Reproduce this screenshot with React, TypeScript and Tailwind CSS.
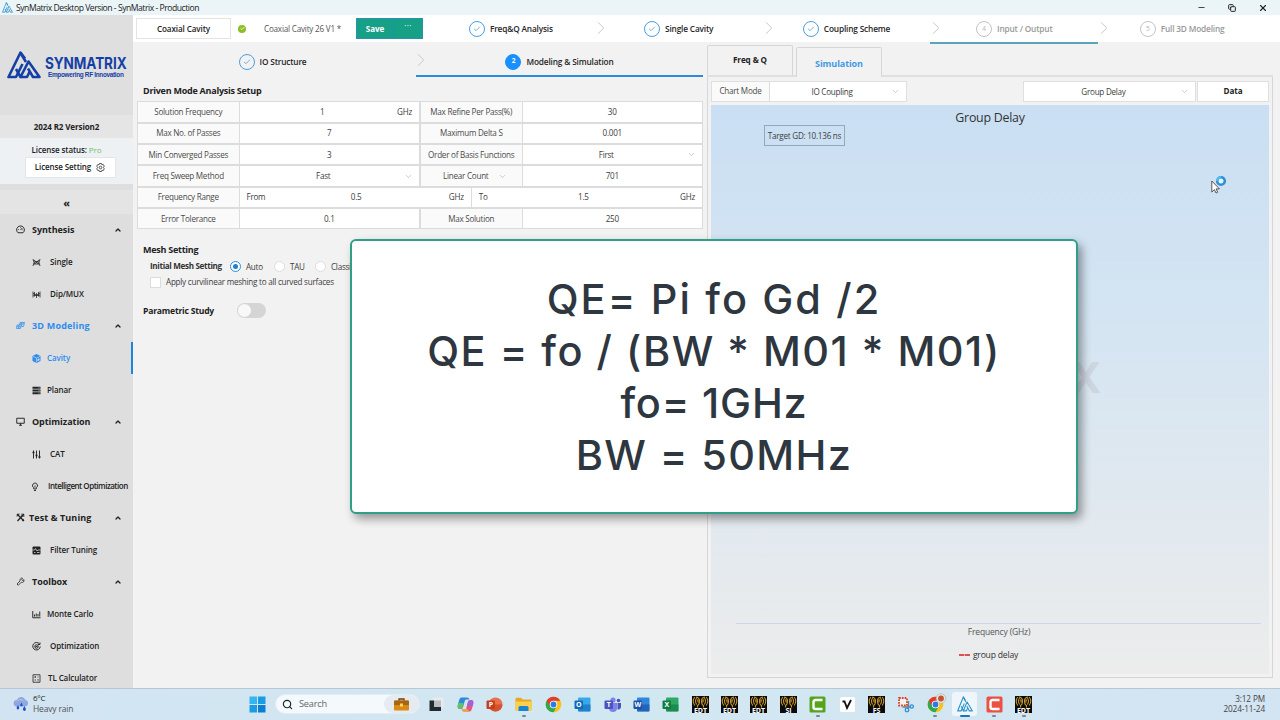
import type { ReactNode } from "react";
import clsx from "clsx";
import { Check, ChevronDown, ChevronRight, ChevronUp, Copy, Minus, Search, X } from "lucide-react";

type Step = {
  label: string;
  state: "done" | "current" | "waiting";
  number: number;
  active?: boolean;
};

const HEADER_STEPS: Step[] = [
  { label: "Freq&Q Analysis", state: "done", number: 1 },
  { label: "Single Cavity", state: "done", number: 2 },
  { label: "Coupling Scheme", state: "done", number: 3 },
  { label: "Input / Output", state: "waiting", number: 4, active: true },
  { label: "Full 3D Modeling", state: "waiting", number: 5 },
];

type MenuItem = {
  label: string;
  icon: ReactNode;
  group?: boolean;
  active?: boolean;
  className: string;
};

const MENU: MenuItem[] = [
  { label: "Synthesis", icon: <GaugeIcon />, group: true, className: "ml-[7px]" },
  { label: "Single", icon: <SingleIcon />, className: "ml-[9px]" },
  { label: "Dip/MUX", icon: <MuxIcon />, className: "ml-[9px]" },
  { label: "3D Modeling", icon: <BlocksIcon />, group: true, active: true, className: "ml-[7px] tracking-[0.2px]" },
  { label: "Cavity", icon: <CubeIcon />, active: true, className: "ml-[6px]" },
  { label: "Planar", icon: <LayersIcon />, className: "ml-[6px]" },
  { label: "Optimization", icon: <MonitorIcon />, group: true, className: "ml-[7px]" },
  { label: "CAT", icon: <SlidersIcon />, className: "ml-[9px]" },
  { label: "Intelligent Optimization", icon: <BulbIcon />, className: "ml-[7px] tracking-[-0.5px]" },
  { label: "Test & Tuning", icon: <ToolsIcon />, group: true, className: "ml-[4px] tracking-[0.1px]" },
  { label: "Filter Tuning", icon: <FilterIcon />, className: "ml-[9px]" },
  { label: "Toolbox", icon: <WrenchIcon />, group: true, className: "ml-[7px]" },
  { label: "Monte Carlo", icon: <ChartIcon />, className: "ml-[6px]" },
  { label: "Optimization", icon: <TargetIcon />, className: "ml-[9px]" },
  { label: "TL Calculator", icon: <CalcIcon />, className: "ml-[7px]" },
];

export default function App() {
  return (
    <div className="relative flex h-[720px] w-[1280px] flex-col overflow-hidden bg-[#f2f2f2] font-['Open_Sans','Noto_Sans',sans-serif] text-[8.1px] leading-none tracking-[-0.25px] text-[#3d3d3d]">
      <TitleBar />
      <div className="flex min-h-0 flex-1">
        <Sidebar />
        <div className="flex min-w-0 flex-1 flex-col">
          <Header />
          <div className="flex flex-1">
            <SetupPane />
            <ResultPane />
          </div>
        </div>
      </div>
      <Taskbar />
      <FormulaCard />
      <Cursor />
    </div>
  );
}

function TitleBar() {
  return (
    <div className="flex h-[15px] shrink-0 items-center bg-[#ebf4f7] pl-[2px] text-[#222]">
      <MountainIcon className="h-[11px] w-[11px] text-[#2b93c9]" />
      <span className="mt-px ml-[3px] text-[8.6px] tracking-[-0.47px]">
        SynMatrix Desktop Version - SynMatrix - Production
      </span>
      <div className="ml-auto flex items-center gap-[22px] pr-[12px]">
        <Minus className="size-[9px]" strokeWidth={2.2} />
        <Copy className="size-[8px] -scale-x-100 -rotate-90" strokeWidth={3} />
        <X className="size-[10px]" strokeWidth={2.6} />
      </div>
    </div>
  );
}

function Sidebar() {
  return (
    <aside className="flex w-[133px] shrink-0 flex-col overflow-hidden bg-[#dedede] tracking-[-0.1px] text-[#222]">
      <div className="flex h-[100px] shrink-0 items-center bg-[#dfdfdf] pl-[7px]">
        <MountainIcon className="h-[28px] w-[34px] shrink-0 text-[#1440a5]" bold />
        <div className="mt-[3px] ml-[4px] flex flex-col text-[#1440a5]">
          <span className="origin-left scale-x-[0.82] font-['Inter',sans-serif] text-[16.5px] leading-[16px] font-bold tracking-[-0.1px]">
            SYNMATRIX
          </span>
          <span className="ml-[3px] font-['Liberation_Sans',sans-serif] text-[6.4px] leading-[8px] font-bold tracking-[-0.3px]">
            Empowering RF Innovation
          </span>
        </div>
      </div>
      <div className="flex h-[23px] shrink-0 items-center justify-center bg-[#e5e5e5] text-[8px] font-bold">
        2024 R2 Version2
      </div>
      <div className="flex h-[46px] shrink-0 flex-col items-center bg-[#eef1f4] pt-[8px] text-[8px] font-semibold">
        <div>
          License status: <span className="font-normal text-[#6cc067]">Pro</span>
        </div>
        <div className="mt-[3px] ml-[7px] flex h-[21px] w-[91px] shrink-0 items-center justify-center gap-[5px] border border-[#e3e5e8] bg-white pb-px">
          License Setting
          <GearIcon />
        </div>
      </div>
      <div className="mt-[6px] flex h-[24px] shrink-0 items-center justify-center bg-[#e4e4e4] text-[11px] font-bold">
        «
      </div>
      <nav className="flex flex-col">
        {MENU.map((item, i) => (
          <div
            key={i}
            className={clsx(
              "flex h-[32px] shrink-0 items-center whitespace-nowrap",
              item.group
                ? "pb-px pl-[16px] text-[9px] font-bold tracking-[-0.05px]"
                : "pl-[32px] text-[8px] font-semibold",
              item.active && "text-[#2d8cf0]",
              item.active && !item.group && "border-r-2 border-[#1c86dc]"
            )}
          >
            <span className="size-[9px] shrink-0">{item.icon}</span>
            <span className={item.className}>{item.label}</span>
            {item.group && (
              <ChevronUp className="mr-[11px] ml-auto size-[8px] text-[#222]" strokeWidth={4} />
            )}
          </div>
        ))}
      </nav>
    </aside>
  );
}

function Header() {
  return (
    <header className="flex h-[27px] shrink-0 bg-white pt-[3px] pl-[3px]">
      <div className="flex h-[21px] w-[95px] items-center justify-center border border-[#e4e4e4] pt-px font-semibold tracking-[-0.1px] text-[#222]">
        Coaxial Cavity
      </div>
      <div className="ml-[7px] flex h-[21px] items-center">
        <span className="flex size-[8px] items-center justify-center rounded-full bg-[#8cbf26]">
          <Check className="size-[5px] text-white" strokeWidth={4} />
        </span>
        <span className="mt-px ml-[18px] w-[92px] tracking-[-0.2px] text-[#555]">Coaxial Cavity 26 V1 *</span>
      </div>
      <div className="flex h-[21px] w-[67px] items-center border border-[#2a92b0] bg-[#16a085] font-bold tracking-[-0.1px] text-white">
        <span className="flex h-full w-[37px] items-center justify-center border-r border-[#1a94a8] pt-px">Save</span>
        <span className="flex flex-1 justify-center pb-[4px] tracking-[0.4px] font-normal">···</span>
      </div>
      <div className="ml-[4px] flex w-[839px]">
        {HEADER_STEPS.map((step, i) => (
          <div
            key={step.number}
            className={clsx(
              "relative flex h-[26px] flex-1 items-center justify-center",
              step.active ? "border-b-2 border-[#5aa5b8] pb-[2px]" : "pb-[4px]"
            )}
          >
            <StepLabel step={step} />
            {i < HEADER_STEPS.length - 1 && (
              <ChevronRight
                className="absolute -top-px -right-[17px] size-[22px] text-[#c4c4c4]"
                strokeWidth={1}
              />
            )}
          </div>
        ))}
      </div>
    </header>
  );
}

function StepLabel({ step }: { step: Step }) {
  return (
    <>
      <span
        className={clsx(
          "flex size-[16px] shrink-0 items-center justify-center rounded-full border text-[6.5px]",
          step.state === "done" && "border-[#4a9fe0] text-[#4a9fe0]",
          step.state === "current" && "border-[#1890ff] bg-[#1890ff] font-bold text-white",
          step.state === "waiting" && "border-[#c4c4c4] text-[#b4b4b4]"
        )}
      >
        {step.state === "done" ? <Check className="size-[8px]" strokeWidth={2.4} /> : step.number}
      </span>
      <span
        className={clsx(
          "mt-px ml-[5px] text-[8.3px] font-semibold tracking-[-0.17px] whitespace-nowrap",
          step.state === "waiting" ? "text-[#999]" : "text-[#262626]"
        )}
      >
        {step.label}
      </span>
    </>
  );
}

function Label({ children, className = "w-[101.5px]" }: { children: ReactNode; className?: string }) {
  return (
    <div
      className={clsx(
        "flex h-full shrink-0 items-center justify-center border-r border-[#dcdcdc] bg-[#fafafa] text-[#4a4a4a]",
        className
      )}
    >
      {children}
    </div>
  );
}

type ValueProps = { children: ReactNode; unit?: string; select?: boolean; className?: string };

function Value({ children, unit, select, className }: ValueProps) {
  return (
    <div className="flex h-full flex-1 items-center bg-white">
      <span
        className={clsx(
          "flex-1 text-center",
          unit && !className && "pl-[8px]",
          select && "pt-px pl-[3px]",
          className
        )}
      >
        {children}
      </span>
      {unit && <span className="pr-[7px]">{unit}</span>}
      {select && <ChevronDown className="mr-[6px] size-[9px] text-[#b5b5b5]" strokeWidth={1.8} />}
    </div>
  );
}

function Row({ left, right }: { left: ReactNode; right: ReactNode }) {
  return (
    <div className="flex h-[21.33px]">
      <div className="flex w-[283px] items-center border border-[#dcdcdc]">{left}</div>
      <div className="flex w-[283px] items-center border border-[#dcdcdc]">{right}</div>
    </div>
  );
}

function SetupPane() {
  return (
    <section className="flex w-[574px] flex-col">
      <div className="flex h-[35px]">
        <div className="relative flex w-[279px] items-center justify-center pt-[4px]">
          <StepLabel step={{ label: "IO Structure", state: "done", number: 1 }} />
          <ChevronRight
            className="absolute top-[7px] -right-[20px] size-[22px] text-[#c4c4c4]"
            strokeWidth={1}
          />
        </div>
        <div className="ml-[4px] flex w-[287px] items-center justify-center border-b-2 border-[#2d8cd8] pt-[6px]">
          <StepLabel step={{ label: "Modeling & Simulation", state: "current", number: 2 }} />
        </div>
      </div>

      <h2 className="mt-[9px] ml-[10px] text-[9px] leading-[10px] font-bold tracking-[-0.25px] text-[#222]">
        Driven Mode Analysis Setup
      </h2>
      <div className="mt-[5.4px] ml-[4px] flex flex-col">
        <Row
          left={<><Label>Solution Frequency</Label><Value unit="GHz">1</Value></>}
          right={<><Label>Max Refine Per Pass(%)</Label><Value>30</Value></>}
        />
        <Row
          left={<><Label>Max No. of Passes</Label><Value>7</Value></>}
          right={<><Label>Maximum Delta S</Label><Value>0.001</Value></>}
        />
        <Row
          left={<><Label>Min Converged Passes</Label><Value>3</Value></>}
          right={<><Label>Order of Basis Functions</Label><Value select>First</Value></>}
        />
        <Row
          left={<><Label>Freq Sweep Method</Label><Value select>Fast</Value></>}
          right={
            <>
              <Label>
                <span className="pt-px pl-[8px]">Linear Count</span>
                <ChevronDown className="ml-[10px] size-[9px] text-[#b5b5b5]" strokeWidth={1.8} />
              </Label>
              <Value>701</Value>
            </>
          }
        />
        <div className="flex h-[21.33px] w-[566px] items-center border border-[#dcdcdc] bg-white">
          <Label>Frequency Range</Label>
          <span className="w-[28px] pl-[7px]">From</span>
          <Value unit="GHz" className="pr-[4px]">0.5</Value>
          <span className="flex h-full w-[28px] items-center border-l border-[#dcdcdc] pl-[7px]">To</span>
          <Value unit="GHz" className="pr-[12px]">1.5</Value>
        </div>
        <Row
          left={<><Label>Error Tolerance</Label><Value>0.1</Value></>}
          right={<><Label>Max Solution</Label><Value>250</Value></>}
        />
      </div>

      <h2 className="mt-[15.6px] ml-[10px] text-[9px] leading-[10px] font-bold tracking-[-0.25px] text-[#222]">
        Mesh Setting
      </h2>
      <div className="mt-[6px] ml-[17px] flex h-[11px] items-center">
        <span className="w-[80px] font-bold tracking-[-0.33px] whitespace-nowrap text-[#333]">Initial Mesh Setting</span>
        <Radio checked />
        <span className="ml-[5px] w-[28px] pt-px">Auto</span>
        <Radio />
        <span className="ml-[5px] w-[25px] pt-px">TAU</span>
        <Radio />
        <span className="ml-[5px] pt-px">Classic</span>
      </div>
      <div className="mt-[5px] ml-[17px] flex h-[11px] items-center">
        <span className="size-[11px] border border-[#dcdcdc] bg-white" />
        <span className="ml-[5px] tracking-[-0.24px]">Apply curvilinear meshing to all curved surfaces</span>
      </div>
      <div className="mt-[15px] ml-[10px] flex h-[15px] items-center">
        <h2 className="w-[94px] pt-px text-[8.6px] font-bold tracking-[-0.22px] text-[#222]">Parametric Study</h2>
        <span className="h-[15px] w-[29px] rounded-full bg-[#d5d5d5] p-px">
          <span className="block size-[13px] rounded-full bg-[#f8f8f8]" />
        </span>
      </div>
    </section>
  );
}

function Radio({ checked = false }: { checked?: boolean }) {
  return (
    <span
      className={clsx(
        "flex size-[11px] items-center justify-center rounded-full border bg-white",
        checked ? "border-[#2d8cd8]" : "border-[#dcdcdc]"
      )}
    >
      {checked && <span className="size-[5px] rounded-full bg-[#1c80d6]" />}
    </span>
  );
}

function ResultPane() {
  return (
    <section className="flex w-[566px] flex-col pt-[3px]">
      <div className="flex h-[32px] items-end border-b-2 border-[#dfdfdf]">
        <div className="flex h-[30px] w-[86px] items-center justify-center rounded-t-[2px] border border-b-0 border-[#d6d6d6] font-bold tracking-[-0.1px] text-[#222]">
          Freq &amp; Q
        </div>
        <div className="-mb-[2px] ml-[3px] flex h-[30px] w-[86px] items-center justify-center rounded-t-[2px] border border-b-0 border-[#d6d6d6] bg-[#f2f2f2] pt-px text-[9px] font-bold tracking-[-0.1px] text-[#4398e4]">
          Simulation
        </div>
      </div>
      <div className="flex h-[601px] flex-col border border-t-0 border-[#d6d6d6] px-[3px] pt-[4px]">
        <div className="flex h-[21px]">
          <div className="flex w-[196px] border border-[#dfdfdf]">
            <Label className="w-[58px]">Chart Mode</Label>
            <Value select>IO Coupling</Value>
          </div>
          <div className="ml-[116px] flex w-[173px] border border-[#dfdfdf]">
            <Value select>Group Delay</Value>
          </div>
          <div className="ml-[1px] flex w-[72px] items-center justify-center border border-[#dfdfdf] bg-white font-bold tracking-[-0.1px] text-[#222]">
            Data
          </div>
        </div>
        <div className="relative mt-[3px] flex h-[569px] w-[558px] flex-col items-center bg-linear-to-b from-[#cadff3] via-[#d5e5f2] via-40% to-[#ececec] pt-[5px]">
          <span className="text-[12.4px] leading-[16px] font-medium tracking-[-0.25px] text-[#333]">Group Delay</span>
          <span className="absolute top-[20px] left-[53px] flex h-[21px] w-[81px] items-center justify-center border border-[#93a8b8] pt-px">
            Target GD: 10.136 ns
          </span>
          <span className="absolute top-[252px] right-[168px] font-['Inter',sans-serif] text-[42px] leading-[42px] font-bold text-[#cdd6e0]">
            X
          </span>
          <div className="mt-[497px] ml-[16px] h-px w-[525px] shrink-0 bg-[#cbd6e8]" />
          <span className="mt-[3px] ml-[18px] text-[8.5px] leading-[10px] tracking-[-0.17px] text-[#555]">
            Frequency (GHz)
          </span>
          <span className="mt-[13px] -ml-[3px] flex items-center text-[8.6px] leading-[10px] tracking-[-0.2px] text-[#333]">
            <svg className="mr-[3px] h-[2px] w-[11px]" viewBox="0 0 11 2">
              <path d="M0 1h5.200M5.800 1H11" stroke="#d81e1e" strokeWidth="1.600" />
            </svg>
            group delay
          </span>
        </div>
      </div>
    </section>
  );
}

function FormulaCard() {
  return (
    <div className="absolute top-[239px] left-[350px] flex h-[275px] w-[728px] flex-col items-center rounded-[6px] border-2 border-[#2f9f87] bg-white pt-[32px] font-['Inter',sans-serif] text-[41.500px] leading-[52px] font-medium whitespace-nowrap text-[#2e373f] shadow-[4px_5px_10px_rgba(0,0,0,0.38)]">
      <p className="tracking-[2.1px]">QE= Pi fo Gd /2</p>
      <p className="tracking-[1.48px]">QE = fo / (BW * M01 * M01)</p>
      <p className="tracking-[0.8px]">fo= 1GHz</p>
      <p className="tracking-[1.35px]">BW = 50MHz</p>
    </div>
  );
}

function Cursor() {
  return (
    <svg className="absolute top-[174px] left-[1210px] h-[20px] w-[18px]" viewBox="0 0 18 20">
      <path d="M1.8 7v11l2.6-2.4 1.6 3.4 1.7-.8-1.6-3.3h3.3z" fill="#fff" stroke="#333" strokeWidth=".8" />
      <circle cx="11" cy="7" r="3.8" fill="#e8f4fc" stroke="#2d8fd5" strokeWidth="2.6" />
      <path d="M7.2 7A3.8 3.8 0 0 1 11 3.2" fill="none" stroke="#55bdec" strokeWidth="2.6" />
    </svg>
  );
}

/* Taskbar */

type TaskApp = { icon: ReactNode; running?: boolean; active?: boolean };

const TASK_APPS: TaskApp[] = [
  { icon: <TaskViewIcon /> },
  { icon: <CopilotIcon /> },
  { icon: <OfficeIcon letter="P" back="#e8704a" front="#c43e1c" round /> },
  { icon: <FolderIcon />, running: true },
  { icon: <ChromeIcon /> },
  { icon: <OfficeIcon letter="O" back="#38a9e8" front="#0f6cbd" /> },
  { icon: <OfficeIcon letter="T" back="#7b83eb" front="#4b53bc" people /> },
  { icon: <OfficeIcon letter="W" back="#2f86dc" front="#1b52a8" /> },
  { icon: <OfficeIcon letter="X" back="#2fa866" front="#107c41" /> },
  { icon: <AnsysIcon text="EDT" /> },
  { icon: <AnsysIcon text="EDT" /> },
  { icon: <AnsysIcon text="EDT" /> },
  { icon: <AnsysIcon text="SI" /> },
  { icon: <CamtasiaIcon className="text-[#54a51c]" />, running: true },
  { icon: <VIcon /> },
  { icon: <AnsysIcon text="FS" /> },
  { icon: <SnipIcon /> },
  { icon: <ChromeIcon badge />, running: true },
  { icon: <MountainIcon className="size-[16px] text-[#2b93c9]" />, active: true },
  { icon: <CamtasiaIcon className="text-[#ee4f43]" />, running: true },
  { icon: <AnsysIcon text="EDT" />, running: true },
];

function Taskbar() {
  return (
    <footer className="flex h-[32px] shrink-0 items-center border-t border-[#b8c7d3] bg-linear-to-r from-[#d2e4f2] via-[#d2e8f1] to-[#d3e4f3] pb-px">
      <div className="flex w-[249px] items-center pl-[13px]">
        <RainIcon />
        <div className="ml-[4px] flex flex-col gap-[2px] pt-px text-[7.9px]">
          <span className="text-[#222]">6°C</span>
          <span className="text-[8.5px] tracking-[-0.18px] text-[#555]">Heavy rain</span>
        </div>
      </div>
      <svg className="size-[17px]" viewBox="0 0 17 17">
        <path d="M.5.5H8V8H.5z" fill="#35b5ef" />
        <path d="M9 .5h7.500V8H9zM.5 9H8v7.500H.5z" fill="#1b9be4" />
        <path d="M9 9h7.500v7.500H9z" fill="#0b7fd5" />
      </svg>
      <div className="ml-[9px] flex h-[20px] w-[145px] items-center rounded-full border border-[#e0edf5] bg-[#f3f9fc] pl-[6px]">
        <Search className="size-[11px] text-[#222]" strokeWidth={2.5} />
        <span className="ml-[6px] text-[9.2px] tracking-[-0.2px] text-[#666]">Search</span>
        <span className="ml-auto flex h-[18px] w-[35px] items-center justify-center rounded-full bg-[#e6ebf2]">
          <BriefcaseIcon />
        </span>
      </div>
      <div className="ml-px flex">
        {TASK_APPS.map((app, i) => (
          <div key={i} className="flex w-[29.400px] justify-center">
            <div
              className={clsx(
                "relative flex h-[24px] w-[25px] items-center justify-center rounded-[3px]",
                app.active && "bg-[#eef6fc]"
              )}
            >
              {app.icon}
              {app.running && <span className="absolute -bottom-px h-[2px] w-[4px] rounded-full bg-[#7c8791]" />}
              {app.active && <span className="absolute -bottom-px h-[2px] w-[10px] rounded-full bg-[#1a74b8]" />}
            </div>
          </div>
        ))}
      </div>
      <div className="ml-auto flex flex-col items-end gap-[2.5px] pr-[15px] text-[8.2px] tracking-[-0.12px] text-[#444]">
        <span>3:12 PM</span>
        <span>2024-11-24</span>
      </div>
    </footer>
  );
}

function RainIcon() {
  return (
    <svg className="size-[16px]" viewBox="0 0 16 16">
      <path d="M4 10.5a3.3 3.3 0 0 1-.2-6.6A4.6 4.6 0 0 1 12.3 4a3.3 3.3 0 0 1 0 6.5z" fill="#8fa8dc" />
      <path d="M4 5.5c2-2.5 5-2.5 7 0" stroke="#b9c9ee" fill="none" />
      <path d="M5 9c-1 2-2 2.700-1 4s2.600 0 2.200-1.400zM8.500 6.500c-1 2-1.600 2.500-1 3.400s2.200.4 2.200-.7zM11.500 10c-1 2-2.200 2.700-1.200 4.200s3 .3 2.500-1.500z" fill="#1f4fd0" />
    </svg>
  );
}

function BriefcaseIcon() {
  return (
    <svg className="h-[13px] w-[15px]" viewBox="0 0 15 13">
      <path d="M5 3V1h5v2" fill="none" stroke="#6e3f0c" strokeWidth="1.3" />
      <rect y="2.500" width="15" height="10" rx="1" fill="#d98a14" />
      <path d="M0 3.500a1 1 0 0 1 1-1h13a1 1 0 0 1 1 1v3.500H0z" fill="#a8650f" />
      <rect x="6" y="5.500" width="3" height="3" fill="#fbd45c" />
    </svg>
  );
}

function TaskViewIcon() {
  return (
    <svg className="size-[16px]" viewBox="0 0 16 16">
      <rect x="5" y="1.500" width="10.500" height="10" fill="#e8eaec" />
      <path d="M1.500 4.500H6V11h7v4H1.500z" fill="#222a31" />
      <rect x="6" y="4.500" width="7" height="6.500" fill="#b8bec4" />
    </svg>
  );
}

function CopilotIcon() {
  return (
    <svg className="size-[17px]" viewBox="0 0 17 17">
      <path d="M4.500 1.500H10c1.500 0 2 .7 2.400 2H9.500C8.300 3.500 8 4.300 7.700 5.200L6 11c-.4 1.300-1 2-2.300 2H3C.8 13 .3 11 .8 9l1.400-5c.4-1.500 1-2.500 2.300-2.500z" fill="#2a8be0" />
      <path d="M1.500 6.500L.8 9c-.5 2 0 4 2.200 4h.7c1.300 0 1.900-.7 2.300-2l1-3.500z" fill="#67bd6a" />
      <path d="M12.500 15.500H7c-1.500 0-2-.7-2.400-2h2.900c1.200 0 1.500-.8 1.800-1.700L11 6c.4-1.300 1-2 2.300-2h.7c2.200 0 2.700 2 2.200 4l-1.400 5c-.4 1.500-1 2.500-2.300 2.500z" fill="#e4567f" />
      <path d="M11 6c.4-1.300 1-2 2.300-2h.7c2.200 0 2.700 2 2.200 4l-.7 2.500-5.500-1z" fill="#a660dc" />
      <path d="M4.600 13.500h2.900c1.200 0 1.500-.8 1.800-1.700l3 3.700H7c-1.500 0-2-.7-2.400-2z" fill="#f6a13a" />
    </svg>
  );
}

type OfficeIconProps = { letter: string; back: string; front: string; round?: boolean; people?: boolean };

function OfficeIcon({ letter, back, front, round, people }: OfficeIconProps) {
  return (
    <svg className="size-[17px]" viewBox="0 0 17 17">
      {round && (
        <>
          <circle cx="9.500" cy="8.500" r="7" fill={back} />
          <path d="M9.500 8.500h7a7 7 0 0 1-14 0z" fill="#d35230" />
        </>
      )}
      {people && (
        <>
          <circle cx="9" cy="4" r="2.600" fill={back} />
          <circle cx="14.500" cy="4.500" r="1.800" fill={front} />
          <path d="M5 7h8v5a4 4 0 0 1-8 0z" fill={back} />
          <path d="M13.500 7H17v4a3 3 0 0 1-3.500 2.500z" fill={front} />
        </>
      )}
      {!round && !people && (
        <>
          <rect x="4" y="1.500" width="12.500" height="14" rx="1" fill={back} />
          <path d="M4 8.500h12.500v6a1 1 0 0 1-1 1H5a1 1 0 0 1-1-1z" fill={front} opacity=".65" />
        </>
      )}
      <rect x=".5" y="4.500" width="8.500" height="8.500" rx="1" fill={front} />
      <text x="4.750" y="11.300" textAnchor="middle" fontSize="7" fontWeight="700" fill="#fff">
        {letter}
      </text>
    </svg>
  );
}

function FolderIcon() {
  return (
    <svg className="size-[17px]" viewBox="0 0 17 17">
      <path d="M.5 3a1.200 1.200 0 0 1 1.200-1.200H6l1.500 1.700h8a1 1 0 0 1 1 1V14h-16z" fill="#e8a920" />
      <path d="M.5 5.500h16V14a1 1 0 0 1-1 1h-14a1 1 0 0 1-1-1z" fill="#fbd04c" />
      <path d="M3.500 15v-3.500a1.500 1.500 0 0 1 1.500-1.500h7a1.500 1.500 0 0 1 1.500 1.500V15z" fill="#1a84d4" />
    </svg>
  );
}

function ChromeIcon({ badge = false }: { badge?: boolean }) {
  return (
    <svg className="size-[17px] overflow-visible" viewBox="0 0 17 17">
      <circle cx="8.500" cy="8.500" r="7.800" fill="#fbc116" />
      <path d="M8.500 8.500L1.750 4.600A7.800 7.800 0 0 0 8.500 16.300l3.300-5.900z" fill="#2da94f" />
      <path d="M8.500 4.750h6.750A7.800 7.800 0 0 0 1.750 4.600l3.500 5.800z" fill="#e33b2e" />
      <circle cx="8.500" cy="8.500" r="3.750" fill="#fff" />
      <circle cx="8.500" cy="8.500" r="2.900" fill="#2f78e6" />
      {badge && (
        <>
          <circle cx="14" cy="2.500" r="4.800" fill="#dfe6ea" stroke="#b8ad90" strokeWidth=".6" />
          <circle cx="14" cy="2.500" r="2.900" fill="#c5532e" />
        </>
      )}
    </svg>
  );
}

function AnsysIcon({ text }: { text: string }) {
  return (
    <svg className="size-[17px]" viewBox="0 0 17 17">
      <rect width="17" height="17" fill="#0c0c0c" />
      <g fill="none" stroke="#c9982a" strokeWidth="1.100">
        <path d="M2.800 1Q-.4 5 2.800 9.500M4.600 2Q2.400 5 4.600 8.500M4 1q3.500.5 3.500 4T5.500 9.500v2M5 4h1v2.500" />
        <path d="M14.200 1q3.200 4 0 8.500M12.400 2q2.200 3 0 6.500M13 1Q9.500 1.500 9.500 5t2 4.500v2M12 4h-1v2.500" />
      </g>
      <text x="8.500" y="16.500" textAnchor="middle" fontSize="7" fontWeight="700" fill="#fff" letterSpacing="0">
        {text}
      </text>
    </svg>
  );
}

function CamtasiaIcon({ className }: { className?: string }) {
  return (
    <svg className={clsx("size-[17px]", className)} viewBox="0 0 17 17">
      <rect x=".5" y=".5" width="16" height="16" rx="1.500" fill="currentColor" />
      <path d="M13.500 4H6.500Q4.500 4 4.500 6v5q0 2 2 2h7" fill="none" stroke="#fff" strokeWidth="2.400" />
    </svg>
  );
}

function VIcon() {
  return (
    <svg className="size-[15px]" viewBox="0 0 15 15">
      <rect width="15" height="15" rx="1.500" fill="#fff" />
      <path d="M2.500 4.500H4.500L7 11l4-8" fill="none" stroke="#111" strokeWidth="1.800" />
    </svg>
  );
}

function SnipIcon() {
  return (
    <svg className="size-[17px]" viewBox="0 0 17 17">
      <rect x="1" y="1" width="10" height="9" fill="#f6f0ee" />
      <rect x="2" y="2" width="8" height="7.500" fill="none" stroke="#d2442c" strokeWidth="1.800" strokeDasharray="1.800 1" />
      <path d="M11.500 5v7.500M5.500 11H13" stroke="#6c8594" strokeWidth="1.400" />
      <circle cx="10" cy="14" r="1.800" fill="none" stroke="#2e8fd3" strokeWidth="1.300" />
      <circle cx="14.800" cy="10.500" r="1.600" fill="none" stroke="#2e8fd3" strokeWidth="1.300" />
    </svg>
  );
}

/* Brand and menu icons */

function MountainIcon({ className, bold = false }: { className?: string; bold?: boolean }) {
  return (
    <svg
      className={className}
      viewBox="0 0 34 28"
      preserveAspectRatio="none"
      fill="none"
      stroke="currentColor"
      strokeWidth={bold ? 2.6 : 2.2}
      strokeLinejoin="round"
    >
      <path d="M18 7.500L13.500 1.500 1.500 26H9l6.500-13" />
      <path d="M9 18l4.500 8 8-15.500L32.500 26H26l-5-8.500" />
      <path d="M13.500 26H20l2.500-5M13.500 2l5.500 9" />
    </svg>
  );
}

function MenuSvg({ children }: { children: ReactNode }) {
  return (
    <svg className="size-[9px]" viewBox="0 0 18 18" fill="none" stroke="currentColor" strokeWidth="1.900">
      {children}
    </svg>
  );
}

function GearIcon() {
  return (
    <svg className="size-[9px]" viewBox="0 0 18 18" fill="none" stroke="#444" strokeWidth="1.800" strokeLinejoin="round">
      <path d="M7 1h4l.8 2.500 2.700-.6 2 3.500L14.800 9l1.700 2.600-2 3.500-2.700-.6L11 17H7l-.8-2.500-2.700.6-2-3.500L3.200 9 1.500 6.400l2-3.500 2.700.6z" />
      <circle cx="9" cy="9" r="2.600" />
    </svg>
  );
}

function GaugeIcon() {
  return (
    <MenuSvg>
      <path d="M4 15.500a7.700 7.700 0 1 1 10 0z" />
      <path d="M9 10l3.500-4M4 9h1.500M9 4v1M13 9.500h1" />
    </MenuSvg>
  );
}

function SingleIcon() {
  return (
    <MenuSvg>
      <path d="M2 2q4 7 0 14M16 2q-4 7 0 14" strokeWidth="1.600" />
      <path d="M4 4l10 9M14 4L4 13M5.500 7h7v5h-7z" strokeWidth="1.600" />
    </MenuSvg>
  );
}

function MuxIcon() {
  return (
    <MenuSvg>
      <path d="M2 3v12M16 3v12M2 7l7 3 7-3M5 4v9M13 4v9M3 11h12M9 6v10" strokeWidth="1.500" />
    </MenuSvg>
  );
}

function BlocksIcon() {
  return (
    <MenuSvg>
      <path d="M2 8h9l-2 7H1zM8 3h9l-2 8h-4M6 8l-1 7M8 3L7 8M2 11.500h8M12 3l-1 5M8 6h8" strokeWidth="1.500" />
    </MenuSvg>
  );
}

function CubeIcon() {
  return (
    <MenuSvg>
      <path d="M9 0l8 3.800v10L9 18l-8-4.200v-10z" fill="currentColor" stroke="none" />
      <path d="M2 4.800l7 3.400 7-3.400M9 8v9" stroke="#dedede" strokeWidth="1.300" />
      <path d="M11 10.500l4-2v4l-4 2z" fill="#dedede" stroke="none" />
    </MenuSvg>
  );
}

function LayersIcon() {
  return (
    <MenuSvg>
      <path d="M1 3.500h16M1 9h16M1 14.500h16" strokeWidth="4" />
      <path d="M13 3.500h2M13 9h2M13 14.500h2" stroke="#dedede" strokeWidth="1.200" />
    </MenuSvg>
  );
}

function MonitorIcon() {
  return (
    <MenuSvg>
      <path d="M1.500 2.500h15v10h-15zM6 16.500h6M9 12.500v4" />
    </MenuSvg>
  );
}

function SlidersIcon() {
  return (
    <MenuSvg>
      <path d="M3 1v16M9 1v16M15 1v16" />
      <path d="M1 5h4M7 11h4M13 14h4" strokeWidth="3" />
    </MenuSvg>
  );
}

function BulbIcon() {
  return (
    <svg className="size-[9px]" viewBox="3 0 18 18" fill="none" stroke="currentColor" strokeWidth="1.800">
      <path d="M6.500 11.500a5 5 0 1 1 5 0v2.500h-5zM7 17h4M9 11V7" />
    </svg>
  );
}

function ToolsIcon() {
  return (
    <MenuSvg>
      <path d="M2 2l14 14M16 2L3 16" strokeWidth="2.600" />
      <path d="M1 6l4-1 1-4M12 1v5h5M12 16l4-3" strokeWidth="2" />
    </MenuSvg>
  );
}

function FilterIcon() {
  return (
    <MenuSvg>
      <rect x="1" y="1" width="16" height="16" rx="2" fill="currentColor" stroke="none" />
      <path d="M1 8h4l2-3 3 5 2-2h5M4 13h3M10 13h5" stroke="#dedede" strokeWidth="1.500" />
    </MenuSvg>
  );
}

function WrenchIcon() {
  return (
    <MenuSvg>
      <path d="M2 14l6-6q-1-4 3-6l2 .5-1.500 3 1.500 1.500 3-1.500q1 4-3 5.500l-2.500-.5-6 6z" strokeWidth="1.600" />
    </MenuSvg>
  );
}

function ChartIcon() {
  return (
    <MenuSvg>
      <path d="M1.500 2v13.500H17M5 13V9M8.500 13V7M12 13V8M15.500 13V3" />
    </MenuSvg>
  );
}

function TargetIcon() {
  return (
    <MenuSvg>
      <path d="M15 4A7.500 7.500 0 1 0 16.500 9M16 1v4h-4" />
      <circle cx="9" cy="9" r="3.500" />
      <path d="M7 9h4" />
    </MenuSvg>
  );
}

function CalcIcon() {
  return (
    <MenuSvg>
      <path d="M2 1.500h14v15H2zM5 6h3M11 6h2M6.500 4.500v3M5 12h3M11 11h2M11 13.500h2" strokeWidth="1.600" />
    </MenuSvg>
  );
}
